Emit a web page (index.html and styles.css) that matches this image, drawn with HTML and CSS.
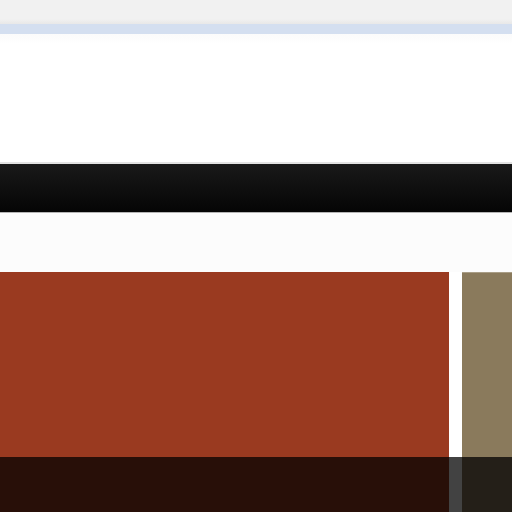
FILE: index.html
```html
<!DOCTYPE html>
<html>
<head>
<meta charset="utf-8">
<link rel="stylesheet" href="styles.css">
</head>
<body>
<div class="page">
  <div class="topbar"></div>
  <div class="subnav"></div>
  <div class="banner"></div>
  <div class="menubar"></div>
  <div class="spacer"></div>
  <div class="cards">
    <div class="card card-red"></div>
    <div class="card card-tan"></div>
  </div>
</div>
<div class="caption-bar"></div>
</body>
</html>
```

FILE: styles.css
```css
html, body {
  margin: 0;
  padding: 0;
  width: 512px;
  height: 512px;
  overflow: hidden;
  background: #ffffff;
  font-family: "Liberation Sans", Arial, sans-serif;
}
.page {
  display: flex;
  flex-direction: column;
  width: 512px;
}
.topbar {
  height: 24px;
  background: linear-gradient(#f1f1f1 0, #f1f1f1 19px, #e8e8e8 24px);
}
.subnav {
  height: 10px;
  background: #d4dff0;
}
.banner {
  height: 128px;
  background: linear-gradient(#fbfbfb 0, #ffffff 10px);
}
.menubar {
  height: 48px;
  background: linear-gradient(#191919, #050505);
  border-top: 2px solid #e2e2e2;
  border-bottom: 1px solid #b5b5b5;
}
.spacer {
  height: 59px;
  background: #fcfcfc;
}
.cards {
  display: flex;
  gap: 13px;
  height: 240px;
  overflow: hidden;
}
.card {
  height: 100%;
}
.card-red {
  flex: none;
  width: 449px;
  background: #9a3a20;
}
.card-tan {
  flex: 1;
  background: #8a7a5c;
  border-top: 1px solid #a99d86;
  box-sizing: border-box;
}
.caption-bar {
  position: fixed;
  left: 0;
  right: 0;
  bottom: 0;
  height: 55px;
  background: rgba(0, 0, 0, 0.74);
}
```
